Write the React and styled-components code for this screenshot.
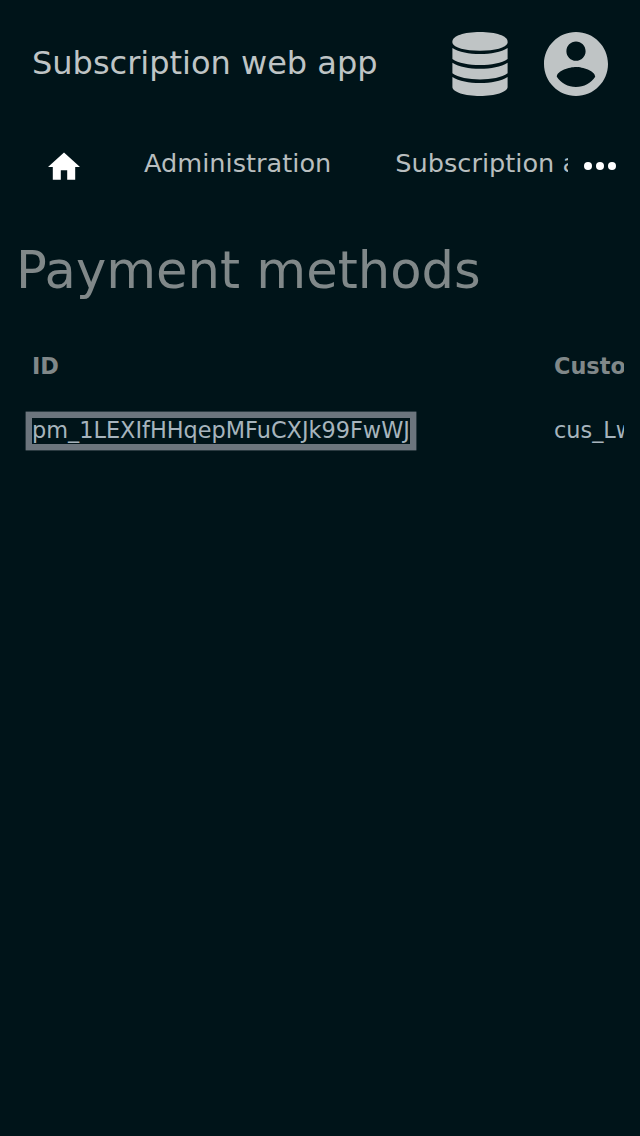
import React from 'react';
import styled, { createGlobalStyle } from 'styled-components';

const GlobalStyle = createGlobalStyle`
  * { box-sizing: border-box; }
  body {
    margin: 0;
    background: #001419;
    font-family: "DejaVu Sans", sans-serif;
    overflow: hidden;
  }
`;
const Page = styled.div`
  width: 640px;
  height: 1136px;
  overflow: hidden;
  background: #001419;
`;
const Header = styled.header`
  display: flex;
  align-items: center;
  height: 128px;
  padding: 0 32px;
`;
const Brand = styled.div`
  flex: 1;
  font-size: 32px;
  color: #bfc4c5;
  white-space: nowrap;
  padding-bottom: 2px;
`;
const HeaderIcons = styled.div`
  display: flex;
  gap: 32px;
`;
const Icon = styled.svg`
  display: block;
  flex: none;
  width: ${(p) => p.$size}px;
  height: ${(p) => p.$size}px;
  fill: ${(p) => p.$color};
`;
const Nav = styled.nav`
  display: flex;
  align-items: center;
  height: 76px;
`;
const HomeLink = styled.a`
  display: flex;
  width: 112px;
  padding: 1px 0 0 48px;
`;
const Links = styled.div`
  display: flex;
  flex: none;
  width: 456px;
  overflow: hidden;
`;
const NavLink = styled.a`
  flex: none;
  padding: 0 32px 7px;
  font-size: 25.6px;
  line-height: 32px;
  color: #b8bebf;
  white-space: nowrap;
`;
const More = styled.button`
  display: flex;
  margin-left: 12px;
  padding: 0;
  border: 0;
  background: none;
`;
const Title = styled.h1`
  margin: 33px 16px 0;
  font-size: 51.2px;
  line-height: 66px;
  font-weight: 400;
  color: #808889;
`;
const TableScroll = styled.div`
  margin: 31px 16px 0;
  overflow: hidden;
`;
const Table = styled.div`
  display: grid;
  grid-template-columns: 522px 400px;
  grid-auto-rows: 64px;
  align-items: center;
`;
const Cell = styled.div`
  height: 26px;
  padding-left: 16px;
  font-size: 22.4px;
  line-height: 26px;
  white-space: nowrap;
  font-weight: ${(p) => (p.$head ? 700 : 400)};
  color: ${(p) => (p.$head ? '#808889' : '#a7b4bd')};
`;
const IdLink = styled.a`
  display: inline-block;
  line-height: 24px;
  padding-bottom: 2px;
  box-shadow: 0 0 0 6.4px #6c757d;
`;

export default function App() {
  return (
    <Page>
      <GlobalStyle />
      <Header>
        <Brand>Subscription web app</Brand>
        <HeaderIcons>
          <Icon $size={64} $color="#bfc4c5" viewBox="0 0 64 64">
            <path d="M4.400 9.500C4.400 4 16 0 32 0S59.600 4 59.600 9.500V11C58 15.800 47 18.700 32 18.700S6 15.800 4.400 11Z" />
            <path d="M4.400 16C11 20.200 21 22 32 22S53 20.200 59.600 16V27C54 31 43 33 32 33S10 31 4.400 27Z" />
            <path d="M4.400 30.700C11 34.900 21 36.700 32 36.700S53 34.900 59.600 30.700V41.300C54 45.500 43 47.500 32 47.500S10 45.500 4.400 41.300Z" />
            <path d="M4.400 45C11 49.200 21 51 32 51S53 49.200 59.600 45V55C59.600 60 47 64 32 64S4.400 60 4.400 55Z" />
          </Icon>
          <Icon $size={64} $color="#bfc4c5" viewBox="2 2 20 20">
            <path d="M12 2C6.480 2 2 6.480 2 12s4.480 10 10 10 10-4.480 10-10S17.520 2 12 2zm0 3c1.660 0 3 1.340 3 3s-1.340 3-3 3-3-1.340-3-3 1.340-3 3-3zm0 14.200c-2.500 0-4.710-1.280-6-3.220.030-1.990 4-3.080 6-3.080 1.990 0 5.970 1.090 6 3.080-1.290 1.940-3.500 3.220-6 3.220z" />
          </Icon>
        </HeaderIcons>
      </Header>
      <Nav>
        <HomeLink>
          <Icon $size={32} $color="#fff" viewBox="2 2 20 20">
            <path d="M10 20v-6h4v6h5v-8h3L12 3 2 12h3v8z" />
          </Icon>
        </HomeLink>
        <Links>
          <NavLink>Administration</NavLink>
          <NavLink>Subscription administration</NavLink>
        </Links>
        <More aria-label="More">
          <Icon $size={40} $color="#fff" viewBox="0 0 40 40">
            <circle cx="8" cy="20" r="4" />
            <circle cx="20" cy="20" r="4" />
            <circle cx="32" cy="20" r="4" />
          </Icon>
        </More>
      </Nav>
      <Title>Payment methods</Title>
      <TableScroll>
        <Table>
          <Cell $head>ID</Cell>
          <Cell $head>Customer</Cell>
          <Cell><IdLink>pm_1LEXIfHHqepMFuCXJk99FwWJ</IdLink></Cell>
          <Cell>cus_LwQyTnB4a7Rk2s</Cell>
        </Table>
      </TableScroll>
    </Page>
  );
}
